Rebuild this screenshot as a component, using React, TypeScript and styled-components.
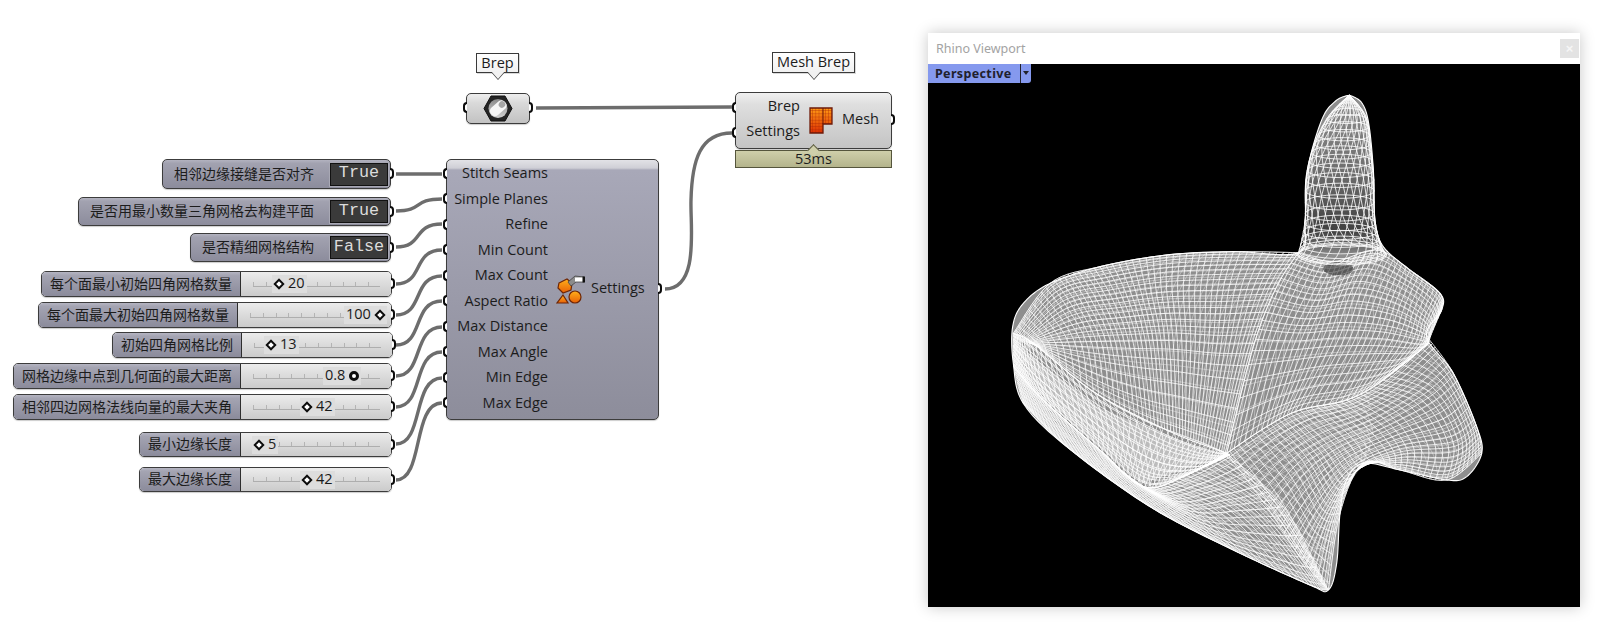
import { useMemo } from 'react';
import styled, { createGlobalStyle } from 'styled-components';

const LATIN = `"Open Sans", "Noto Sans", sans-serif`;
const CJK = `"Noto Sans CJK SC", "Noto Sans", sans-serif`;

const GlobalStyle = createGlobalStyle`
  html, body {
    margin: 0;
    background: #fff;
  }
`;

const Page = styled.div`
  display: flex;
  align-items: flex-start;
  width: 1606px;
  height: 625px;
  overflow: hidden;
  background: #fff;
`;

/* Grasshopper canvas: the nodes are placed freely, so they sit at their own coordinates */
const GraphCanvas = styled.div`
  position: relative;
  flex: 0 0 928px;
  height: 625px;
`;

const WireLayer = styled.svg`
  position: absolute;
  left: 0;
  top: 0;
`;

const Placed = styled.div<{ $x: number; $y: number; $w: number; $h: number }>`
  position: absolute;
  left: ${(p) => p.$x}px;
  top: ${(p) => p.$y}px;
  width: ${(p) => p.$w}px;
  height: ${(p) => p.$h}px;
  box-sizing: border-box;
`;

const GripBase = styled.span<{ $top: number }>`
  position: absolute;
  top: ${(p) => p.$top}px;
  width: 2px;
  height: 7px;
  box-sizing: content-box;
  border: 2.5px solid #0c0c0c;
  background: #fff;
`;

const InGrip = styled(GripBase)`
  right: 100%;
  border-right: none;
  border-radius: 7px 0 0 7px;
`;

const OutGrip = styled(GripBase)`
  left: 100%;
  border-left: none;
  border-radius: 0 7px 7px 0;
`;

const ToggleNode = styled(Placed)`
  display: flex;
  align-items: center;
  justify-content: flex-end;
  padding-right: 2px;
  border: 1px solid #3c3c3c;
  border-radius: 5px;
  background: linear-gradient(#b3b3c0 0, #a2a2b0 12%, #8c8c9c 100%);
  box-shadow: 0 1px 1px rgba(0, 0, 0, 0.2);
`;

const RowLabel = styled.span`
  margin-bottom: 3px;
  font-family: ${CJK};
  font-size: 14px;
  line-height: 18px;
  color: #1c1c1c;
  white-space: nowrap;
`;

const ToggleBox = styled.span`
  display: flex;
  align-items: center;
  justify-content: center;
  flex: 0 0 58px;
  height: 23px;
  margin-left: 16px;
  padding-bottom: 3px;
  box-sizing: border-box;
  border: 1px solid #111;
  outline: 1px solid #a8a8b4;
  background: #3a3a3a;
  font-family: "Liberation Mono", monospace;
  font-size: 16.8px;
  color: #dcdcdc;
`;

const SliderNode = styled(Placed)`
  display: flex;
  border: 1px solid #3c3c3c;
  border-radius: 5px;
  box-shadow: 0 1px 1px rgba(0, 0, 0, 0.2);
`;

const SliderLabel = styled.div<{ $w: number }>`
  display: flex;
  align-items: center;
  justify-content: flex-end;
  flex: 0 0 ${(p) => p.$w}px;
  box-sizing: border-box;
  padding-right: 8px;
  border-right: 1px solid #2e2e2e;
  border-radius: 4px 0 0 4px;
  background: linear-gradient(#b5b5c2 0, #a4a4b2 14%, #8b8b9b 100%);
`;

const SliderTrack = styled.div`
  position: relative;
  display: flex;
  align-items: center;
  flex: 1;
  padding: 0 11px 0 12px;
  border-radius: 0 4px 4px 0;
  background: linear-gradient(#ececec 0, #dedede 40%, #cbcbcb 100%);
`;

const Rail = styled.div`
  width: 100%;
  height: 4px;
  border-bottom: 1px solid #aeaeae;
  background: repeating-linear-gradient(90deg, #b4b4b4 0 1px, transparent 1px 12.8px);
`;

const Thumb = styled.div<{ $at: number; $flip?: boolean }>`
  position: absolute;
  left: ${(p) => p.$at}px;
  top: 50%;
  display: flex;
  flex-direction: ${(p) => (p.$flip ? 'row-reverse' : 'row')};
  align-items: center;
  gap: 4px;
  padding: 0 2px;
  transform: translateY(-50%);
  background: #dddddd;
`;

const Diamond = styled.span`
  display: block;
  width: 4px;
  height: 4px;
  margin: 1px;
  border: 2px solid #0d0d0d;
  background: #fff;
  transform: rotate(45deg);
`;

const RoundHandle = styled.span`
  display: block;
  width: 4px;
  height: 4px;
  border: 3px solid #0d0d0d;
  border-radius: 50%;
  background: #fff;
`;

const ThumbValue = styled.span`
  margin-bottom: 2px;
  font-family: ${LATIN};
  font-size: 14.5px;
  line-height: 16px;
  color: #1a1a1a;
`;

const ComponentNode = styled(Placed)<{ $dark?: boolean }>`
  display: flex;
  align-items: stretch;
  border: 1px solid #3c3c3c;
  border-radius: 5px;
  box-shadow: 0 1px 1px rgba(0, 0, 0, 0.2);
  background: ${(p) =>
    p.$dark
      ? 'linear-gradient(#e2e2e6 0, #cfcfd6 8px, #a8a8b8 10px, #8d8d9b 100%)'
      : 'linear-gradient(#f0f0f0 0, #dfdfdf 20%, #c4c4c4 100%)'};
`;

const PortColumn = styled.div<{ $w: number; $step: number }>`
  display: flex;
  flex-direction: column;
  align-items: flex-end;
  flex: 0 0 ${(p) => p.$w}px;
  font-family: ${LATIN};
  font-size: 14.5px;
  line-height: ${(p) => p.$step}px;
  color: #1c1c1c;
`;

const CenterRow = styled.div<{ $gap: number; $left: number }>`
  display: flex;
  align-items: center;
  gap: ${(p) => p.$gap}px;
  margin-left: ${(p) => p.$left}px;
  font-family: ${LATIN};
  font-size: 14.5px;
  color: #1c1c1c;
`;

const RaisedLabel = styled.span`
  margin-bottom: 4px;
`;

const ParamNode = styled(Placed)`
  display: flex;
  align-items: center;
  justify-content: center;
  border: 1px solid #3c3c3c;
  border-radius: 5px;
  box-shadow: 0 1px 1px rgba(0, 0, 0, 0.2);
  background: linear-gradient(#eeeeee 0, #dadada 30%, #c2c2c2 100%);
`;

const Bubble = styled(Placed)`
  display: flex;
  align-items: center;
  justify-content: center;
  padding-bottom: 2px;
  border: 1px solid #3a3a3a;
  background: linear-gradient(#ffffff, #f1f1f1);
  font-family: ${LATIN};
  font-size: 14.5px;
  color: #1c1c1c;
  box-shadow: 1px 1px 0 rgba(0, 0, 0, 0.15);

  &::before,
  &::after {
    content: '';
    position: absolute;
    left: 50%;
    width: 0;
    height: 0;
    margin-left: -7px;
    border-left: 7px solid transparent;
    border-right: 7px solid transparent;
  }

  &::before {
    top: 100%;
    border-top: 8px solid #3a3a3a;
  }

  &::after {
    top: calc(100% - 1.5px);
    border-top: 8px solid #f1f1f1;
  }
`;

const ProfilerBar = styled(Placed)`
  display: flex;
  align-items: center;
  justify-content: center;
  padding-bottom: 1px;
  border: 1px solid #55553c;
  background: linear-gradient(#cfcfaa, #b4b48c);
  font-family: ${LATIN};
  font-size: 14.5px;
  color: #1c1c1c;

  &::before {
    content: '';
    position: absolute;
    left: 50%;
    top: -5px;
    width: 8px;
    height: 8px;
    margin-left: -5px;
    border-left: 1px solid #55553c;
    border-top: 1px solid #55553c;
    background: #cfcfaa;
    transform: rotate(45deg);
  }
`;

/* Rhino viewport window */
const ViewportWindow = styled.div`
  flex: 0 0 652px;
  height: 574px;
  margin-top: 33px;
  display: flex;
  flex-direction: column;
  background: #fff;
  box-shadow: 0 0 14px rgba(0, 0, 0, 0.22);
`;

const TitleBar = styled.div`
  display: flex;
  align-items: center;
  justify-content: space-between;
  flex: 0 0 31px;
  padding: 0 1px 0 8px;
  font-family: "Noto Sans", sans-serif;
  font-size: 12.5px;
  color: #a3a3a3;
`;

const CloseBox = styled.span`
  display: flex;
  align-items: center;
  justify-content: center;
  width: 19px;
  height: 19px;
  background: #e3e3e3;
  font-family: "Liberation Sans", sans-serif;
  font-size: 13px;
  font-weight: 700;
  color: #f6f6f6;
`;

const Viewport = styled.div`
  position: relative;
  flex: 1;
  background: #000;
`;

const ViewTab = styled.div`
  position: absolute;
  left: 0;
  top: 0;
  display: flex;
  align-items: stretch;
  width: 103px;
  height: 19px;
  border-radius: 0 0 3px 0;
  background: #8599ee;
  font-family: "Noto Sans", sans-serif;
  font-size: 12.5px;
  font-weight: 700;
  letter-spacing: 0.35px;
  color: #20202c;
`;

const ViewTabName = styled.span`
  display: flex;
  align-items: center;
  flex: 0 0 93px;
  box-sizing: border-box;
  padding-left: 7px;
  border-right: 1px solid #22222c;
`;

const ViewTabCaret = styled.span`
  width: 0;
  height: 0;
  margin: 7px 0 0 2px;
  border-left: 3px solid transparent;
  border-right: 3px solid transparent;
  border-top: 4px solid #22222c;
`;

const MeshDrawing = styled.svg`
  display: block;
`;

type Pt = [number, number];

const TOGGLES = [
  { label: '相邻边缘接缝是否对齐', value: 'True', x: 162, y: 159, w: 229, h: 30 },
  { label: '是否用最小数量三角网格去构建平面', value: 'True', x: 78, y: 197, w: 313, h: 29 },
  { label: '是否精细网格结构', value: 'False', x: 190, y: 233, w: 201, h: 29 },
];

const SLIDERS = [
  { label: '每个面最小初始四角网格数量', value: '20', x: 41, y: 271, w: 351, h: 26, split: 199, at: 31 },
  { label: '每个面最大初始四角网格数量', value: '100', x: 38, y: 302, w: 354, h: 26, split: 199, at: 106, flip: true },
  { label: '初始四角网格比例', value: '13', x: 112, y: 332, w: 281, h: 26, split: 129, at: 22 },
  { label: '网格边缘中点到几何面的最大距离', value: '0.8', x: 13, y: 363, w: 379, h: 26, split: 227, at: 82, flip: true, round: true },
  { label: '相邻四边网格法线向量的最大夹角', value: '42', x: 13, y: 394, w: 379, h: 26, split: 227, at: 59 },
  { label: '最小边缘长度', value: '5', x: 139, y: 432, w: 253, h: 25, split: 101, at: 11 },
  { label: '最大边缘长度', value: '42', x: 139, y: 467, w: 253, h: 25, split: 101, at: 59 },
];

const SETTINGS_INPUTS = [
  'Stitch Seams',
  'Simple Planes',
  'Refine',
  'Min Count',
  'Max Count',
  'Aspect Ratio',
  'Max Distance',
  'Max Angle',
  'Min Edge',
  'Max Edge',
];

const WIRES: [number, number][] = [
  [174, 174],
  [211, 199],
  [247, 224],
  [284, 250],
  [315, 276],
  [345, 301],
  [376, 327],
  [407, 352],
  [444, 378],
  [480, 403],
];

const catmull = (a: number, b: number, c: number, d: number, t: number) =>
  0.5 * (2 * b + (c - a) * t + (2 * a - 5 * b + 4 * c - d) * t * t + (3 * b - a - 3 * c + d) * t * t * t);

const sample = (pts: Pt[], t: number): Pt => {
  const n = pts.length - 1;
  const f = Math.min(Math.max(t, 0), 1) * n;
  const i = Math.min(Math.floor(f), n - 1);
  const local = f - i;
  const p0 = pts[Math.max(i - 1, 0)];
  const p1 = pts[i];
  const p2 = pts[i + 1];
  const p3 = pts[Math.min(i + 2, n)];
  return [catmull(p0[0], p1[0], p2[0], p3[0], local), catmull(p0[1], p1[1], p2[1], p3[1], local)];
};

const surface = (grid: Pt[][], u: number, v: number) => sample(grid.map((row) => sample(row, u)), v);

const toPath = (pts: Pt[]) =>
  pts.map((p, i) => `${i ? 'L' : 'M'}${p[0].toFixed(1)} ${p[1].toFixed(1)}`).join('');

// iso lines of a patch; skew slants the u family so overlapping layers read as a moire
const patchLines = (grid: Pt[][], nU: number, nV: number, skew = 0) => {
  let d = '';
  const steps = 36;
  const extra = Math.ceil(Math.abs(skew) * nU);
  for (let i = -extra; i <= nU + extra; i++) {
    const pts: Pt[] = [];
    for (let s = 0; s <= steps; s++) {
      const v = s / steps;
      const u = i / nU + skew * v;
      if (u >= 0 && u <= 1) pts.push(surface(grid, u, v));
    }
    if (pts.length > 1) d += toPath(pts);
  }
  for (let j = 0; j <= nV; j++) {
    const pts: Pt[] = [];
    for (let s = 0; s <= steps; s++) pts.push(surface(grid, s / steps, j / nV));
    d += toPath(pts);
  }
  return d;
};

const OUTLINE: Pt[] = [
  [1048, 45], [1085, 68], [1106, 130], [1120, 270], [1125, 420], [1150, 500], [1230, 570], [1320, 640], [1325, 690],
  [1280, 770], [1360, 880], [1430, 1040], [1445, 1120], [1400, 1190], [1340, 1200], [1200, 1170], [1090, 1150],
  [1040, 1200], [1020, 1300], [1010, 1450], [985, 1530], [930, 1515], [700, 1410], [450, 1280], [200, 1100],
  [70, 970], [40, 850], [38, 740], [70, 670], [150, 610], [300, 560], [500, 525], [700, 515], [895, 518],
  [915, 420], [920, 280], [965, 120], [1008, 62], [1048, 45],
];

const BOWL: Pt[][] = [
  [[40, 760], [150, 610], [300, 560], [500, 525], [700, 515], [895, 518]],
  [[70, 780], [200, 680], [350, 650], [500, 630], [670, 625], [830, 620]],
  [[90, 790], [260, 790], [400, 790], [520, 790], [650, 800], [760, 800]],
  [[100, 790], [280, 935], [430, 1020], [530, 1060], [610, 1090], [680, 1120]],
];

const MOUND: Pt[][] = [
  [[895, 518], [1000, 545], [1130, 510], [1230, 570], [1320, 640], [1325, 690]],
  [[830, 620], [950, 650], [1070, 630], [1190, 660], [1280, 720], [1295, 760]],
  [[760, 800], [880, 800], [1010, 790], [1140, 790], [1250, 800], [1285, 790]],
  [[680, 1120], [800, 1040], [900, 990], [1040, 960], [1150, 900], [1285, 790]],
];

const LOBE: Pt[][] = [
  [[680, 1120], [800, 1040], [900, 990], [1040, 960], [1150, 900], [1285, 775]],
  [[800, 1280], [900, 1160], [1000, 1090], [1140, 1030], [1280, 950], [1360, 880]],
  [[900, 1430], [970, 1290], [1060, 1170], [1200, 1110], [1360, 1090], [1430, 1040]],
  [[985, 1530], [1020, 1300], [1090, 1150], [1200, 1170], [1340, 1200], [1445, 1120]],
];

const BAND: Pt[][] = [
  [[40, 760], [100, 790], [280, 935], [500, 1050], [640, 1105], [680, 1120]],
  [[40, 810], [110, 890], [300, 1040], [460, 1140], [590, 1160], [690, 1125]],
  [[42, 860], [130, 960], [300, 1110], [430, 1220], [550, 1190], [680, 1120]],
];

const FRONT: Pt[][] = [
  [[42, 860], [130, 960], [300, 1110], [430, 1220], [550, 1190], [680, 1120]],
  [[55, 920], [170, 1040], [340, 1170], [560, 1290], [740, 1290], [850, 1280]],
  [[70, 970], [200, 1100], [450, 1280], [700, 1410], [930, 1515], [985, 1530]],
];

// laid across the front/lobe seam so the two grids read as one surface
const CROSS: Pt[][] = [
  [[430, 1220], [600, 1170], [760, 1080], [920, 1000], [1100, 920]],
  [[600, 1330], [760, 1260], [880, 1180], [1000, 1120], [1120, 1060]],
  [[930, 1515], [970, 1440], [1000, 1340], [1030, 1240], [1090, 1150]],
];

const SPIKE_LEFT: Pt[] = [[1048, 45], [985, 110], [940, 200], [918, 300], [915, 420], [900, 500], [893, 525]];
const SPIKE_RIGHT: Pt[] = [[1048, 45], [1098, 110], [1112, 200], [1122, 300], [1125, 420], [1145, 500], [1160, 525]];

const spikeLines = () => {
  const ring = (v: number, th: number): Pt => {
    const l = sample(SPIKE_LEFT, v);
    const r = sample(SPIKE_RIGHT, v);
    const half = (r[0] - l[0]) / 2;
    return [(l[0] + r[0]) / 2 + half * Math.cos(th), (l[1] + r[1]) / 2 + half * 0.22 * Math.sin(th)];
  };
  let d = '';
  for (let j = 1; j <= 22; j++) {
    const pts: Pt[] = [];
    for (let s = 0; s <= 32; s++) pts.push(ring(j / 22, (s / 32) * Math.PI * 2));
    d += toPath(pts);
  }
  for (let i = 0; i < 26; i++) {
    const pts: Pt[] = [];
    for (let s = 0; s <= 32; s++) pts.push(ring(s / 32, (i / 26) * Math.PI * 2 + (s / 32) * 1.7));
    d += toPath(pts);
  }
  return d;
};

function WireMesh() {
  const { outline, back, front, band, spike } = useMemo(() => {
    const loop: Pt[] = [];
    for (let s = 0; s <= 500; s++) loop.push(sample(OUTLINE, s / 500));
    return {
      outline: `${toPath(loop)}Z`,
      back:
        patchLines(BOWL, 36, 20, -0.22) +
        patchLines(LOBE, 30, 18, 0.2) +
        patchLines(FRONT, 36, 12, 0.16) +
        patchLines(MOUND, 30, 14, 0.24) +
        patchLines(CROSS, 26, 20, 0.15),
      front:
        patchLines(BOWL, 50, 26) +
        patchLines(MOUND, 40, 22) +
        patchLines(LOBE, 40, 26) +
        patchLines(FRONT, 54, 18),
      band: patchLines(BAND, 56, 10) + patchLines(BAND, 40, 8, 0.14),
      spike: spikeLines(),
    };
  }, []);

  return (
    <MeshDrawing width={652} height={543} viewBox="-216 -48 1956 1629">
      <defs>
        <linearGradient id="spikeFill" x1="0" y1="0" x2="0" y2="1">
          <stop offset="0" stopColor="#8f8f8f" />
          <stop offset="0.45" stopColor="#707070" />
          <stop offset="0.85" stopColor="#404040" />
          <stop offset="1" stopColor="#888" />
        </linearGradient>
      </defs>
      <path d={outline} fill="#8e8e8e" />
      <path
        d="M1048 50C985 110 925 240 918 400L905 525H1135L1125 400C1120 270 1100 110 1048 50Z"
        fill="url(#spikeFill)"
      />
      <path d="M42 790L300 985L660 1130L430 1210L130 950Z" fill="#bcbcbc" />
      <path d={back} fill="none" stroke="#fff" strokeWidth={1.6} strokeOpacity={0.7} />
      <path d={front} fill="none" stroke="#fff" strokeWidth={2.6} strokeOpacity={0.92} />
      <path d={band} fill="none" stroke="#fff" strokeWidth={2.8} strokeOpacity={0.88} />
      <ellipse cx="1015" cy="566" rx="45" ry="20" fill="#333" fillOpacity={0.6} />
      <path d={spike} fill="none" stroke="#fff" strokeWidth={2.6} strokeOpacity={0.95} />
      <path d={outline} fill="none" stroke="#fff" strokeWidth={3.4} />
    </MeshDrawing>
  );
}

function BrepIcon() {
  return (
    <svg width="30" height="27" viewBox="0 0 30 27">
      <defs>
        <linearGradient id="brepFace" x1="0" y1="0" x2="0" y2="1">
          <stop offset="0" stopColor="#8a8a8a" />
          <stop offset="1" stopColor="#d0d0d0" />
        </linearGradient>
      </defs>
      <polygon points="8,1 22,1 29,13.5 22,26 8,26 1,13.5" fill="#242424" stroke="#111" />
      <circle cx="15" cy="13.5" r="9.5" fill="url(#brepFace)" />
      <path d="M8 13 L16 6 A5.2 5.2 0 0 1 23 13 L15 20 A5 5 0 0 1 8 13Z" fill="#f6f6f6" />
      <ellipse cx="19" cy="9.5" rx="3.2" ry="3.4" transform="rotate(40 19 9.5)" fill="#a6a6a6" />
    </svg>
  );
}

function MeshIcon() {
  return (
    <svg width="24" height="27" viewBox="0 0 24 27">
      <defs>
        <linearGradient id="meshGlow" x1="0" y1="0" x2="0" y2="1">
          <stop offset="0" stopColor="#ff9a14" />
          <stop offset="1" stopColor="#dc3004" />
        </linearGradient>
        <pattern id="meshCells" width="3.2" height="3.2" patternUnits="userSpaceOnUse">
          <path d="M0 0H3.2M0 0V3.2" stroke="#a82204" strokeWidth="0.8" strokeOpacity="0.8" />
        </pattern>
      </defs>
      <path d="M1 1H23V17H14V26H1Z" fill="url(#meshGlow)" />
      <path d="M1 1H23V17H14V26H1Z" fill="url(#meshCells)" stroke="#6e1a08" strokeWidth="1.3" />
      <path d="M14 1V17" stroke="#6e1a08" strokeWidth="1" />
    </svg>
  );
}

function SettingsIcon() {
  return (
    <svg width="30" height="30" viewBox="0 0 30 30">
      <defs>
        <linearGradient id="shapeFill" x1="0" y1="0" x2="0" y2="1">
          <stop offset="0" stopColor="#ffb01a" />
          <stop offset="1" stopColor="#e86006" />
        </linearGradient>
      </defs>
      <polygon points="3,8 11,4 16,8 15,15 7,18 2,13" fill="url(#shapeFill)" stroke="#6e2606" strokeWidth="1.2" />
      <circle cx="19" cy="22" r="6" fill="url(#shapeFill)" stroke="#6e2606" strokeWidth="1.2" />
      <polygon points="7,20 12,28 1,28" fill="url(#shapeFill)" stroke="#6e2606" strokeWidth="1.2" />
      <polygon points="12,7 19,1 28,2 28,7 20,7 15,11" fill="#8c8c8c" stroke="#444" strokeWidth="0.8" />
      <rect x="19" y="2.5" width="8" height="4" fill="#fff" />
      <rect x="26.5" y="1.5" width="2.5" height="6" fill="#111" />
    </svg>
  );
}

export default function App() {
  return (
    <Page>
      <GlobalStyle />
      <GraphCanvas>
        <WireLayer width={928} height={625} fill="none" stroke="#6d6d6d" strokeWidth={3.4}>
          {WIRES.map(([from, to]) => (
            <path key={from} d={`M396 ${from}C424 ${from} 412 ${to} 442 ${to}`} />
          ))}
          <path d="M536 108L732 107" />
          <path d="M665 289C700 289 690 225 691 200C692 160 700 133 732 133" />
        </WireLayer>

        {TOGGLES.map((t) => (
          <ToggleNode key={t.label} $x={t.x} $y={t.y} $w={t.w} $h={t.h}>
            <RowLabel>{t.label}</RowLabel>
            <ToggleBox>{t.value}</ToggleBox>
            <OutGrip $top={(t.h - 14) / 2} />
          </ToggleNode>
        ))}

        {SLIDERS.map((s) => (
          <SliderNode key={s.label} $x={s.x} $y={s.y} $w={s.w} $h={s.h}>
            <SliderLabel $w={s.split}>
              <RowLabel>{s.label}</RowLabel>
            </SliderLabel>
            <SliderTrack>
              <Rail />
              <Thumb $at={s.at} $flip={s.flip}>
                {s.round ? <RoundHandle /> : <Diamond />}
                <ThumbValue>{s.value}</ThumbValue>
              </Thumb>
            </SliderTrack>
            <OutGrip $top={6} />
          </SliderNode>
        ))}

        <Bubble $x={476} $y={53} $w={43} $h={20}>Brep</Bubble>
        <ParamNode $x={466} $y={93} $w={64} $h={31}>
          <BrepIcon />
          <InGrip $top={8} />
          <OutGrip $top={8} />
        </ParamNode>

        <Bubble $x={772} $y={52} $w={83} $h={21}>Mesh Brep</Bubble>
        <ComponentNode $x={735} $y={92} $w={157} $h={57}>
          <PortColumn $w={64} $step={25}>
            <span>Brep</span>
            <span>Settings</span>
          </PortColumn>
          <CenterRow $gap={9} $left={9}>
            <MeshIcon />
            <RaisedLabel>Mesh</RaisedLabel>
          </CenterRow>
          <InGrip $top={9} />
          <InGrip $top={34} />
          <OutGrip $top={21} />
        </ComponentNode>
        <ProfilerBar $x={735} $y={150} $w={157} $h={18}>53ms</ProfilerBar>

        <ComponentNode $dark $x={446} $y={159} $w={213} $h={261}>
          <PortColumn $w={101} $step={25.5}>
            {SETTINGS_INPUTS.map((name) => (
              <span key={name}>{name}</span>
            ))}
          </PortColumn>
          <CenterRow $gap={5} $left={8}>
            <SettingsIcon />
            <RaisedLabel>Settings</RaisedLabel>
          </CenterRow>
          {SETTINGS_INPUTS.map((name, i) => (
            <InGrip key={name} $top={8 + i * 25.45} />
          ))}
          <OutGrip $top={123} />
        </ComponentNode>
      </GraphCanvas>

      <ViewportWindow>
        <TitleBar>
          <span>Rhino Viewport</span>
          <CloseBox>×</CloseBox>
        </TitleBar>
        <Viewport>
          <WireMesh />
          <ViewTab>
            <ViewTabName>Perspective</ViewTabName>
            <ViewTabCaret />
          </ViewTab>
        </Viewport>
      </ViewportWindow>
    </Page>
  );
}
